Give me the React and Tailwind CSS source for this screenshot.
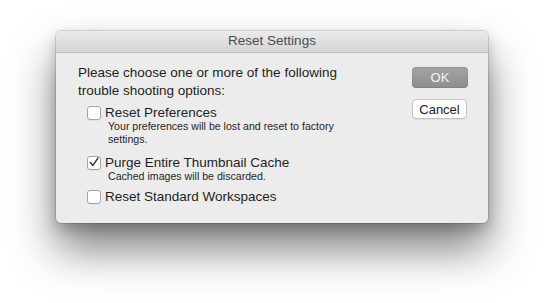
import { useState } from 'react'

function Checkbox({ checked }) {
  return (
    <span className="mt-[1px] flex h-[14px] w-[14px] shrink-0 items-center justify-center rounded-[3px] border border-[#a5a5a5] bg-white shadow-[0_1px_0_rgba(0,0,0,0.04)]">
      {checked && (
        <svg viewBox="0 0 13 13" className="h-[13px] w-[13px]">
          <path d="M2.6 6.6 L5.3 9.6 L10.8 1.8" fill="none" stroke="#3a3a3a" strokeWidth="1.7" strokeLinecap="round" strokeLinejoin="round" />
        </svg>
      )}
    </span>
  )
}

function Option({ label, note, checked, onToggle, className = '' }) {
  return (
    <div className={`flex cursor-default gap-[4px] ${className}`} onClick={onToggle}>
      <Checkbox checked={checked} />
      <div className="flex flex-col">
        <span className="text-[13.5px] leading-[16px] text-[#1e1e1e]">{label}</span>
        {note && (
          <span className="-mt-[1px] pl-[3px] text-[10.6px] leading-[13.3px] text-[#262626]">{note}</span>
        )}
      </div>
    </div>
  )
}

export default function App() {
  const [opts, setOpts] = useState({ prefs: false, cache: true, workspaces: false })
  const toggle = (k) => setOpts((o) => ({ ...o, [k]: !o[k] }))

  return (
    <div className="h-[303px] w-[544px] bg-white pl-[56px] pt-[31px] font-['Liberation_Sans',Arial,sans-serif]">
      <div className="flex h-[192px] w-[432px] flex-col overflow-hidden rounded-[5px] bg-[#ececec] shadow-[0_0_0_1px_rgba(0,0,0,0.12),0_26px_44px_rgba(0,0,0,0.5),0_6px_14px_rgba(0,0,0,0.2)]">
        <div className="flex h-[22px] shrink-0 items-center justify-center border-b border-[#bcbcbc] bg-gradient-to-b from-[#ebebeb] to-[#d5d5d5]">
          <span className="text-[13.5px] text-[#4d4d4d]">Reset Settings</span>
        </div>

        <div className="flex flex-1 pl-[22px] pr-[20px] pt-[11px]">
          <div className="flex flex-1 flex-col">
            <p className="text-[13.5px] leading-[18px] text-[#1e1e1e]">
              Please choose one or more of the following
              <br />
              trouble shooting options:
            </p>
            <div className="mt-[5px] flex flex-col pl-[9px]">
              <Option
                label="Reset Preferences"
                note={<>Your preferences will be lost and reset to factory<br />settings.</>}
                checked={opts.prefs}
                onToggle={() => toggle('prefs')}
              />
              <Option
                className="mt-[8px]"
                label="Purge Entire Thumbnail Cache"
                note="Cached images will be discarded."
                checked={opts.cache}
                onToggle={() => toggle('cache')}
              />
              <Option
                className="mt-[6px]"
                label="Reset Standard Workspaces"
                checked={opts.workspaces}
                onToggle={() => toggle('workspaces')}
              />
            </div>
          </div>

          <div className="flex w-[56px] flex-col gap-[11px] pt-[3px]">
            <button className="h-[21px] w-[56px] rounded-[4px] bg-gradient-to-b from-[#a3a3a3] to-[#8e8e8e] text-[13px] text-[#f4f4f4] shadow-[inset_0_0_0_1px_rgba(0,0,0,0.08)]">
              OK
            </button>
            <button className="h-[20px] w-[55px] rounded-[4px] border border-[#c2c2c2] bg-white text-[13px] text-[#1e1e1e] shadow-[0_1px_0_rgba(0,0,0,0.06)]">
              Cancel
            </button>
          </div>
        </div>
      </div>
    </div>
  )
}
